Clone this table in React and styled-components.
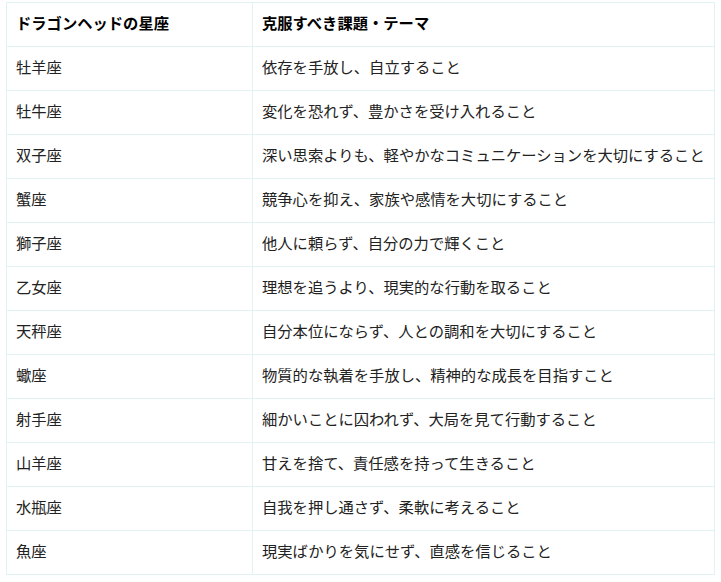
import styled, { createGlobalStyle } from "styled-components";

const GlobalStyle = createGlobalStyle`
  body {
    margin: 0;
    background: #fff;
    font-family: "Noto Sans CJK JP", "Noto Sans", sans-serif;
  }
`;

const Wrapper = styled.div`
  padding: 2px 6px;
`;

const Table = styled.table`
  width: 709px;
  border-collapse: collapse;
  table-layout: fixed;
  color: #222;
  font-size: 15.3px;
`;

const Cell = styled.td`
  height: 40px;
  padding: 0 8px 3px 9px;
  border: 1px solid #e2f1f2;
  white-space: nowrap;
  font-weight: ${({ head }) => (head ? 700 : 400)};
  color: ${({ head }) => (head ? "#000" : "#222")};
  text-align: left;
  vertical-align: middle;
  line-height: 1;
`;

const rows = [
  ["牡羊座", "依存を手放し、自立すること"],
  ["牡牛座", "変化を恐れず、豊かさを受け入れること"],
  ["双子座", "深い思索よりも、軽やかなコミュニケーションを大切にすること"],
  ["蟹座", "競争心を抑え、家族や感情を大切にすること"],
  ["獅子座", "他人に頼らず、自分の力で輝くこと"],
  ["乙女座", "理想を追うより、現実的な行動を取ること"],
  ["天秤座", "自分本位にならず、人との調和を大切にすること"],
  ["蠍座", "物質的な執着を手放し、精神的な成長を目指すこと"],
  ["射手座", "細かいことに囚われず、大局を見て行動すること"],
  ["山羊座", "甘えを捨て、責任感を持って生きること"],
  ["水瓶座", "自我を押し通さず、柔軟に考えること"],
  ["魚座", "現実ばかりを気にせず、直感を信じること"],
];

export default function App() {
  return (
    <>
      <GlobalStyle />
      <Wrapper>
        <Table>
          <colgroup>
            <col style={{ width: 246 }} />
            <col />
          </colgroup>
          <thead>
            <tr>
              <Cell as="th" head>
                ドラゴンヘッドの星座
              </Cell>
              <Cell as="th" head>
                克服すべき課題・テーマ
              </Cell>
            </tr>
          </thead>
          <tbody>
            {rows.map(([sign, theme]) => (
              <tr key={sign}>
                <Cell>{sign}</Cell>
                <Cell>{theme}</Cell>
              </tr>
            ))}
          </tbody>
        </Table>
      </Wrapper>
    </>
  );
}
